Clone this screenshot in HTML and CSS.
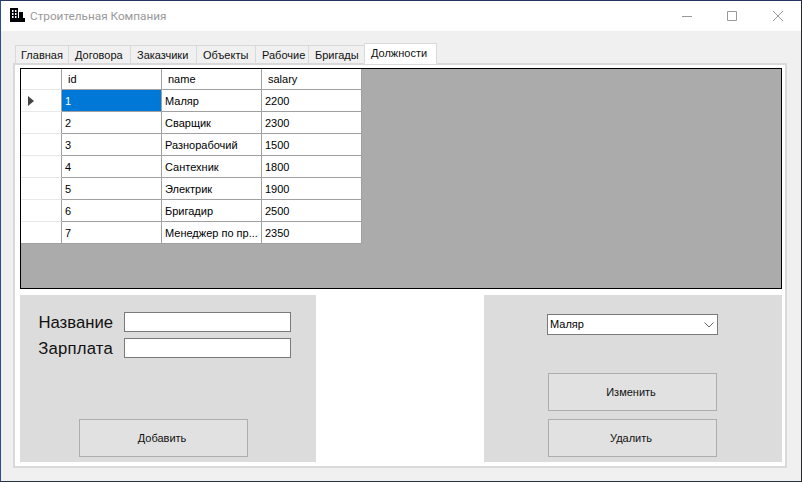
FILE: index.html
```html
<!DOCTYPE html>
<html lang="ru">
<head>
<meta charset="utf-8">
<title>Строительная Компания</title>
<link rel="stylesheet" href="styles.css">
</head>
<body>
<div class="window">
  <header class="titlebar">
    <svg class="app-icon" width="15" height="14" viewBox="0 0 15 14">
      <path d="M0 0h8v14H0z" fill="#000"/>
      <path d="M8 9h7v5H8z" fill="#000"/>
      <path d="M2 2h1.500v2H2zM5 2h1.500v2H5zM2 5h1.500v2H2zM5 5h1.500v2H5zM2 8h1.500v2H2zM5 8h1.500v2H5z" fill="#fff"/>
      <path d="M9 4h4v5H9z" fill="#000"/>
      <path d="M8 9h1v1H8zM13 9h2v1h-2z" fill="#fff"/>
    </svg>
    <span class="title">Строительная Компания</span>
    <div class="controls">
      <svg class="ctl" width="46" height="30" viewBox="0 0 46 30"><path d="M19 15.500h10" stroke="#999" fill="none"/></svg>
      <svg class="ctl" width="46" height="30" viewBox="0 0 46 30"><path d="M18.500 10.500h9v9h-9z" stroke="#999" fill="none"/></svg>
      <svg class="ctl" width="46" height="30" viewBox="0 0 46 30"><path d="M18 10l10 10M28 10l-10 10" stroke="#999" fill="none"/></svg>
    </div>
  </header>
  <main class="client">
    <nav class="tabs">
      <span class="tab t1">Главная</span>
      <span class="tab t2">Договора</span>
      <span class="tab t3">Заказчики</span>
      <span class="tab t4">Объекты</span>
      <span class="tab t5">Рабочие</span>
      <span class="tab t6">Бригады</span>
      <span class="tab active">Должности</span>
    </nav>
    <section class="page">
      <div class="grid">
        <table class="table">
          <colgroup><col class="c0"><col class="c1"><col class="c2"><col class="c3"></colgroup>
          <thead>
            <tr><th class="rowhead"></th><th class="head">id</th><th class="head">name</th><th class="head">salary</th></tr>
          </thead>
          <tbody>
            <tr><th class="rowhead"><span class="marker"></span></th><td class="selected">1</td><td class="name">Маляр</td><td>2200</td></tr>
            <tr><th class="rowhead"></th><td>2</td><td class="name">Сварщик</td><td>2300</td></tr>
            <tr><th class="rowhead"></th><td>3</td><td class="name">Разнорабочий</td><td>1500</td></tr>
            <tr><th class="rowhead"></th><td>4</td><td class="name">Сантехник</td><td>1800</td></tr>
            <tr><th class="rowhead"></th><td>5</td><td class="name">Электрик</td><td>1900</td></tr>
            <tr><th class="rowhead"></th><td>6</td><td class="name">Бригадир</td><td>2500</td></tr>
            <tr><th class="rowhead"></th><td>7</td><td class="name">Менеджер по пр...</td><td>2350</td></tr>
          </tbody>
        </table>
      </div>
      <div class="bottom">
        <div class="panel panel-left">
          <div class="form">
            <label class="label">Название</label><div class="input"></div>
            <label class="label label-wide">Зарплата</label><div class="input"></div>
          </div>
          <button class="btn add">Добавить</button>
        </div>
        <div class="panel panel-right">
          <div class="combo"><span class="combo-text">Маляр</span>
            <svg width="10" height="6" viewBox="0 0 10 6"><path d="M0.500 0.500L5 5L9.500 0.500" stroke="#666" fill="none"/></svg>
          </div>
          <button class="btn edit">Изменить</button>
          <button class="btn del">Удалить</button>
        </div>
      </div>
    </section>
  </main>
</div>
</body>
</html>
```
FILE: styles.css
```css
* { box-sizing: border-box; }
html, body { margin: 0; padding: 0; }
body { width: 802px; height: 482px; overflow: hidden; background: #2a3f78; font-family: "Liberation Sans", Arial, sans-serif; }
.window {
  width: 802px; height: 482px;
  border-style: solid; border-width: 1px;
  border-color: #28365e #26272f #26303f #2c4a9e;
  display: flex; flex-direction: column;
  background: #f0f0f0;
}
.titlebar {
  height: 30px; flex: none; background: #fff;
  display: flex; align-items: flex-start;
}
.app-icon { margin: 7px 0 0 9px; flex: none; }
.title {
  margin: 7px 0 0 5px;
  font: 11.750px/16px Roboto, "Open Sans", sans-serif;
  color: #999;
}
.controls { margin-left: auto; display: flex; }
.ctl { display: block; }
.client { flex: 1; padding: 12px 14px 13px 12px; display: flex; flex-direction: column; min-height: 0; }
.tabs { display: flex; height: 21px; flex: none; align-items: flex-end; padding-left: 2px; margin-bottom: -1px; position: relative; z-index: 1; }
.tab {
  height: 19px; font-size: 11px; line-height: 18px; color: #111;
  background: #f0f0f0;
  border: 1px solid #d9d9d9; border-left: none;
  padding: 0 0 0 6px; white-space: nowrap; flex: none;
}
.t1 { width: 54px; border-left: 1px solid #d9d9d9; padding-left: 5px; }
.t2 { width: 62px; }
.t3 { width: 66px; }
.t4 { width: 59px; }
.t5 { width: 53px; }
.t6 { width: 56px; }
.tab.active {
  width: 73px; height: 21px; margin-left: -1px; background: #fff;
  border-left: 1px solid #d9d9d9; border-bottom-color: #fff; line-height: 19px;
}
.page {
  flex: 1; width: 774px; background: #fff; border: 2px solid #d9d9d9;
  padding: 3px 3px 3px 5px; display: flex; flex-direction: column; min-height: 0;
}
.grid { height: 221px; width: 762px; flex: none; background: #ababab; border: 1px solid #000; overflow: hidden; }
.table { border-collapse: separate; border-spacing: 0; table-layout: fixed; width: 341px; font-size: 11px; color: #000; }
.c0 { width: 41px; } .c1 { width: 100px; } .c2 { width: 100px; } .c3 { width: 100px; }
.table th, .table td { height: 22px; padding: 0; font-weight: normal; background: #fff; text-align: left; border-right: 1px solid #a0a0a0; border-bottom: 1px solid #a0a0a0; white-space: nowrap; overflow: hidden; }
.table thead th { height: 21px; }
.table td { padding-left: 3px; font-size: 11px; }
.table .name { padding-left: 3px; }
.table .head { padding-left: 6px; }
.table .rowhead { border-bottom-color: #e8e8e8; }
.table tbody tr:last-child .rowhead { border-bottom-color: #a0a0a0; }
.table td.selected { background: #0078d7; color: #fff; }
.marker { display: block; width: 0; height: 0; border-style: solid; border-width: 5px 0 5px 6px; border-color: transparent transparent transparent #444; margin-left: 7px; }
.bottom { display: flex; justify-content: space-between; width: 762px; margin-top: 6px; flex: 1; min-height: 0; }
.panel { background: #dcdcdc; height: 167px; display: flex; flex-direction: column; }
.panel-left { width: 296px; padding: 17px 0 5px 0; }
.panel-right { width: 298px; padding: 19px 0 5px 63px; }
.form { display: grid; grid-template-columns: 93px 167px; grid-auto-rows: 20px; column-gap: 11px; row-gap: 6px; }
.label { font-size: 16.700px; line-height: 22px; text-align: right; color: #111; white-space: nowrap; }
.label-wide { letter-spacing: 0.200px; }
.input { height: 20px; background: #fff; border: 1px solid #7a7a7a; }
.btn {
  width: 169px; height: 38px; flex: none; padding: 0 3px 0 0;
  background: #e1e1e1; border: 1px solid #adadad; color: #111;
  font: 11px "Liberation Sans", Arial, sans-serif;
}
.add { margin: auto 0 0 59px; }
.edit { margin: 38px 0 0 1px; }
.del { margin: 8px 0 0 1px; }
.combo {
  width: 171px; height: 21px; flex: none; background: #fff; border: 1px solid #7a7a7a;
  display: flex; align-items: center; justify-content: space-between;
  padding: 0 3px 0 2px; font-size: 11px; color: #000;
}
.combo-text { line-height: 17px; margin-bottom: 1px; }
```
